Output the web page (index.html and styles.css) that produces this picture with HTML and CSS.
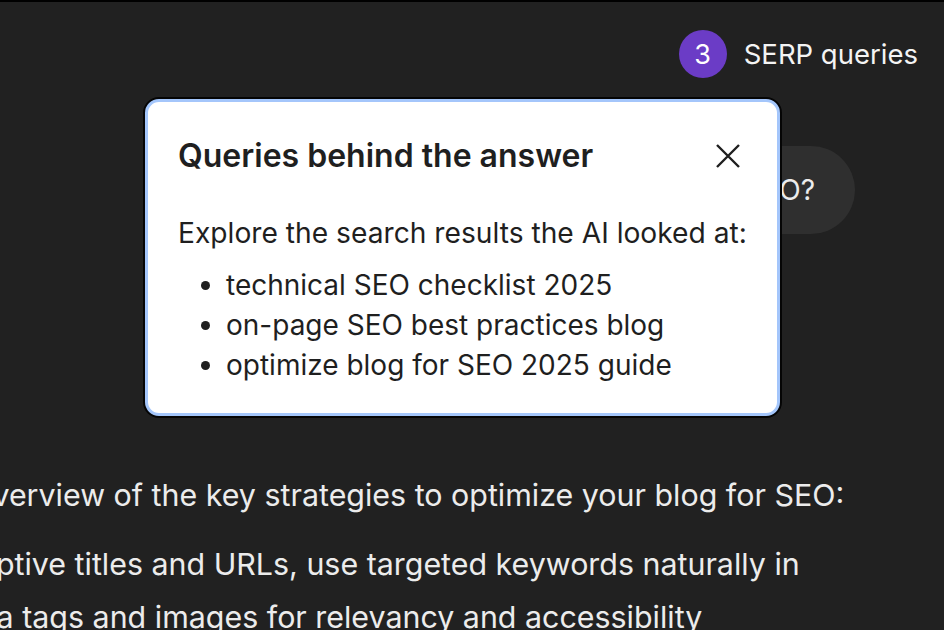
FILE: index.html
```html
<!DOCTYPE html>
<html lang="en">
  <head>
    <title>SERP queries</title>
    <link rel="stylesheet" href="styles.css">
  </head>

  <body>
    <div class="topbar">
      <div class="serp">
        <span class="count">3</span>
        <span class="serp-label">SERP queries</span>
      </div>
    </div>

    <div class="ask-row">
      <div class="bubble">How do I optimize my blog for SEO?</div>
    </div>

    <div class="answer">
      <p class="lead">Here's an overview of the key strategies to optimize your blog for SEO:</p>
      <p class="line first">Use descriptive titles and URLs, use targeted keywords naturally in</p>
      <p class="line second">and meta tags and images for relevancy and accessibility</p>
    </div>

    <!-- popup over the chat -->
    <div class="popup">
      <div class="popup-head">
        <h2>Queries behind the answer</h2>
        <svg class="close" width="24" height="24" viewBox="0 0 24 24">
          <path d="M1 1 L23 23 M23 1 L1 23" stroke="#1f1f1f" stroke-width="2.4" fill="none"/>
        </svg>
      </div>
      <p class="intro">Explore the search results the AI looked at:</p>
      <ul class="queries">
        <li>technical SEO checklist 2025</li>
        <li>on-page SEO best practices blog</li>
        <li>optimize blog for SEO 2025 guide</li>
      </ul>
    </div>
  </body>
</html>
```

FILE: styles.css
```css
body {
  margin: 0;
  height: 630px;
  overflow: hidden;
  background-color: #212121;
  border-top: 2px solid #000;
  font-family: Inter, "Noto Sans", sans-serif;
  color: #ececec;
  position: relative;
}

.topbar {
  display: flex;
  justify-content: flex-end;
  padding: 28px 26px 0 0;
}

.serp {
  display: flex;
  align-items: center;
  gap: 17px;
}

.count {
  width: 48px;
  height: 48px;
  border-radius: 50%;
  background-color: #6b3cc6;
  color: #fff;
  font-size: 27px;
  display: flex;
  align-items: center;
  justify-content: center;
}

.serp-label {
  font-size: 27.5px;
  color: #f4f4f4;
}

.ask-row {
  display: flex;
  justify-content: flex-end;
  padding: 68px 89px 0 0;
}

.bubble {
  background-color: #2f2f2f;
  border-radius: 44px;
  height: 88px;
  display: flex;
  align-items: center;
  padding: 0 40px;
  font-size: 28px;
  color: #ececec;
}

.answer {
  padding-top: 241px;
}

.answer p {
  margin: 0;
  font-size: 30.4px;
  white-space: nowrap;
}

.lead {
  margin-left: -171px !important;
  line-height: 40px;
}

.line {
  line-height: 53px;
}

.line.first {
  margin-top: 23px !important;
  margin-left: -158px !important;
}

.line.second {
  margin-left: -120px !important;
}

.popup {
  position: absolute;
  left: 145px;
  top: 97px;
  box-sizing: border-box;
  width: 635px;
  background-color: #fff;
  border: 3px solid #a4c6fb;
  border-radius: 14px;
  box-shadow: 0 0 0 2px #050505;
  padding: 36px 30px 28px 30px;
  color: #1f1f1f;
}

.popup-head {
  display: flex;
  justify-content: space-between;
  align-items: center;
  height: 36px;
}

.popup-head h2 {
  margin: 0;
  font-size: 32px;
  font-weight: 600;
  line-height: 36px;
}

.close {
  margin-right: 7px;
}

.intro {
  margin: 43px 0 0 0;
  font-size: 28.2px;
  line-height: 32px;
}

.queries {
  margin: 16px 0 0 0;
  padding-left: 48px;
  font-size: 28px;
  line-height: 40px;
}
```
